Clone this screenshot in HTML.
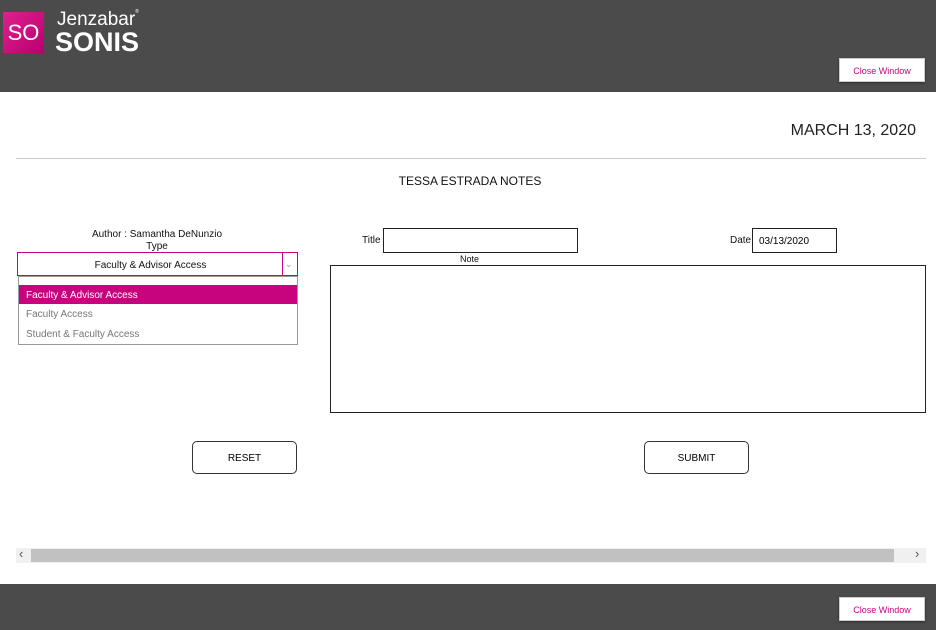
<!DOCTYPE html>
<html><head><style>
*{box-sizing:border-box;margin:0;padding:0}
body{width:936px;height:630px;position:relative;background:#fff;font-family:"Liberation Sans",Arial,sans-serif;overflow:hidden}
.a{position:absolute}
.hdr{left:0;top:0;width:936px;height:92px;background:#4b4b4b}
.ftr{left:0;top:584px;width:936px;height:46px;background:#4b4b4b}
.btnc{width:86px;height:24px;background:#fff;border:1px solid #ccc;color:#c8037e;font-size:9px;text-align:center;line-height:24px;box-shadow:0 1px 2px rgba(0,0,0,.4)}
.t{font-size:10px;color:#111}
.btn{width:105px;height:33px;border:1px solid #333;border-radius:5px;font-size:10px;text-align:center;line-height:33px;background:#fff}
</style></head><body>
<div class="a hdr"></div>
<div class="a" style="left:3px;top:12px;width:41px;height:41px;background:linear-gradient(135deg,#e0208f,#b8006f);border-radius:2px;color:#fff;font-size:22px;line-height:41px;text-align:center">SO</div>
<div class="a" style="left:57px;top:9px;color:#fff;font-size:19px">Jenzabar<span style="font-size:5px;vertical-align:top">®</span></div>
<div class="a" style="left:55px;top:27px;color:#fff;font-size:27px;font-weight:bold;letter-spacing:0px">SONIS</div>
<div class="a btnc" style="left:839px;top:58px">Close Window</div>
<div class="a" style="right:20px;top:122px;font-size:16px;color:#222">MARCH 13, 2020</div>
<div class="a" style="left:16px;top:158px;width:910px;height:1px;background:#ccc"></div>
<div class="a" style="left:2px;width:936px;top:174px;text-align:center;font-size:12px;color:#111">TESSA ESTRADA NOTES</div>
<div class="a t" style="left:17px;width:280px;top:229px;text-align:center;line-height:12px">Author : Samantha DeNunzio<br>Type</div>
<div class="a" style="left:17px;top:252px;width:281px;height:24px;border:1px solid #c8037e;font-size:10px;text-align:center;line-height:26px;color:#111"><div style="width:265px">Faculty &amp; Advisor Access</div><div class="a" style="left:264px;top:0;height:22px;width:1px;background:#c8037e"></div><div class="a" style="left:267px;top:-2px;color:#999;font-size:9px">⌄</div></div>
<div class="a" style="left:18px;top:276px;width:280px;height:69px;border:1px solid #999;background:#fff;font-size:10px;color:#777">
<div style="margin-top:8px;height:19px;background:#c8037e;color:#fff;padding-left:7px;line-height:21px">Faculty &amp; Advisor Access</div>
<div style="height:20px;padding-left:7px;line-height:22px">Faculty Access</div>
<div style="height:20px;padding-left:7px;line-height:22px">Student &amp; Faculty Access</div></div>
<div class="a t" style="left:362px;top:235px">Title</div>
<div class="a" style="left:383px;top:228px;width:195px;height:25px;border:1px solid #222"></div>
<div class="a t" style="left:730px;top:235px">Date</div>
<div class="a" style="left:752px;top:228px;width:85px;height:25px;border:1px solid #222;font-size:10px;line-height:25px;padding-left:6px">03/13/2020</div>
<div class="a t" style="left:460px;top:254px;font-size:9px">Note</div>
<div class="a" style="left:330px;top:265px;width:596px;height:148px;border:1px solid #222"></div>
<div class="a btn" style="left:192px;top:441px">RESET</div>
<div class="a btn" style="left:644px;top:441px">SUBMIT</div>
<div class="a" style="left:16px;top:548px;width:910px;height:15px;background:#f0f0f0"></div>
<div class="a" style="left:31px;top:549px;width:863px;height:13px;background:#c1c1c1"></div>
<div class="a" style="left:19px;top:546px;font-size:13px;color:#555">‹</div>
<div class="a" style="left:915px;top:546px;font-size:13px;color:#555">›</div>
<div class="a ftr"></div>
<div class="a btnc" style="left:839px;top:597px">Close Window</div>
</body></html>
